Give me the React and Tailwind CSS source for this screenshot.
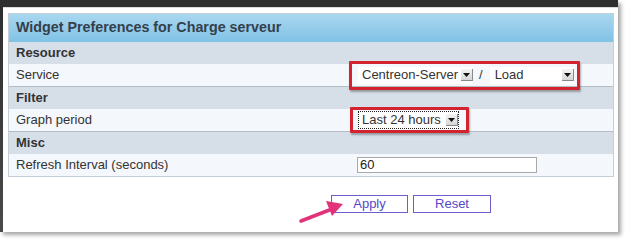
import React from 'react';

function ArrowBox() {
    return (
        <span className="flex items-center justify-center w-[12px] h-[12px] bg-gradient-to-b from-[#f4f4f4] to-[#d6d6d6] border-r border-b border-[#8a8a8a] shrink-0">
            <svg width="7" height="4" viewBox="0 0 7 4"><path d="M0 0 L7 0 L3.5 4 Z" fill="#111" /></svg>
        </span>
    );
}

function SectionRow({ title }) {
    return (
        <div className="h-[22px] flex items-center px-[7px] bg-[#d6dee8] font-bold text-[#333]">{title}</div>
    );
}

function DataRow({ label, children }) {
    return (
        <div className="h-[23px] flex items-center bg-[#f4f7fb] border-b border-[#b4bcc5]">
            <div className="w-[342px] pl-[7px] text-[#333]">{label}</div>
            <div className="flex-1 relative h-full flex items-center">{children}</div>
        </div>
    );
}

export default function App() {
    return (
        <div className="w-[626px] h-[240px] bg-white overflow-hidden text-[13px] text-[#333]" style={{ fontFamily: '"Liberation Sans", Arial, sans-serif' }}>
            {/* Window on dark backdrop */}
            <div className="relative w-[618px] h-[232px] bg-gradient-to-b from-[#2e2e2e] to-[#4a4a4a] pt-[7px] pl-[3px] shadow-[3px_3px_4px_rgba(0,0,0,0.35)]">
                <div className="h-full bg-white border-t border-[#dcdcdc] pt-[5px] pl-[5px] pr-[4px]">
                    {/* Preferences table */}
                    <div className="border border-[#c3ced8]">
                        <div className="h-[28px] flex items-center px-[7px] bg-gradient-to-b from-[#a9d7f0] to-[#80c2e5] font-bold text-[14.3px] text-[#34404a]">
                            Widget Preferences for Charge serveur
                        </div>
                        <SectionRow title="Resource" />
                        <DataRow label="Service">
                            <div className="flex items-center pl-[7px]">
                                <div className="flex items-center w-[115px] h-[17px] bg-white">
                                    <span className="flex-1 pl-[4px] overflow-hidden whitespace-nowrap">Centreon-Server</span>
                                    <ArrowBox />
                                </div>
                                <span className="px-[6px]">/</span>
                                <div className="flex items-center w-[84px] h-[17px] bg-white ml-[1px]">
                                    <span className="flex-1 pl-[5px]">Load</span>
                                    <ArrowBox />
                                </div>
                            </div>
                            <div className="absolute left-[-2px] top-[-3px] w-[231px] h-[29px] border-[3px] border-[#d3232f] rounded-[1px] shadow-[1px_2px_2px_rgba(0,0,0,0.3)]" />
                        </DataRow>
                        <SectionRow title="Filter" />
                        <DataRow label="Graph period">
                            <div className="pl-[7px]">
                                <div className="flex items-center w-[101px] h-[18px] bg-white border border-dotted border-[#222]">
                                    <span className="flex-1 pl-[3px] whitespace-nowrap overflow-hidden">Last 24 hours</span>
                                    <ArrowBox />
                                </div>
                            </div>
                            <div className="absolute left-[-1px] top-[-2px] w-[119px] h-[26px] border-[3px] border-[#d3232f] rounded-[1px] shadow-[1px_2px_2px_rgba(0,0,0,0.3)]" />
                        </DataRow>
                        <SectionRow title="Misc" />
                        <div className="h-[22px] flex items-center bg-[#f4f7fb]">
                            <div className="w-[342px] pl-[7px]">Refresh Interval (seconds)</div>
                            <div className="pl-[6px]">
                                <div className="w-[180px] h-[16px] border border-[#a9a9a9] bg-white pl-[2px] leading-[14px] text-[#222]">60</div>
                            </div>
                        </div>
                    </div>

                    {/* Buttons */}
                    <div className="relative flex gap-[5px] pl-[323px] mt-[18px]">
                        <button className="w-[77px] h-[18px] border border-[#6a5fcc] bg-white text-[#5548c8] text-[13px] leading-[16px]">Apply</button>
                        <button className="w-[78px] h-[18px] border border-[#6a5fcc] bg-white text-[#5548c8] text-[13px] leading-[16px]">Reset</button>
                        {/* Pink annotation arrow */}
                        <svg className="absolute left-[290px] top-[2px]" width="52" height="28" viewBox="0 0 52 28">
                            <line x1="3" y1="24" x2="34" y2="12" stroke="#e2327a" strokeWidth="3.5" strokeLinecap="round" />
                            <path d="M45 7 L28 4 L34 19 Z" fill="#e2327a" />
                        </svg>
                    </div>
                </div>
            </div>
        </div>
    );
}
